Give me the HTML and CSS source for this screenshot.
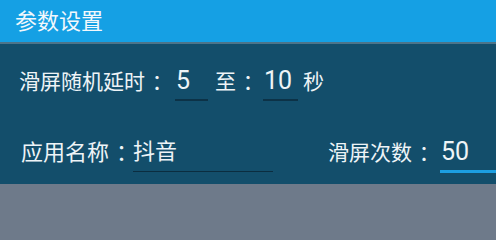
FILE: index.html
```html
<!DOCTYPE html>
<html lang="zh-CN">
<head>
<meta charset="utf-8">
<title>参数设置</title>
<link rel="stylesheet" href="styles.css">
</head>
<body>
<div class="header">参数设置</div>
<div class="sep"></div>
<div class="panel">
  <div class="row row1">
    <span class="label">滑屏随机延时<span class="colon">：</span></span>
    <span class="field f-min">5</span>
    <span class="label to">至<span class="colon">：</span></span>
    <span class="field f-max">10</span>
    <span class="label unit">秒</span>
  </div>
  <div class="row row2">
    <div class="group">
      <span class="label lg">应用名称<span class="colon">：</span></span>
      <span class="field f-app">抖音</span>
    </div>
    <div class="group">
      <span class="label lg2">滑屏次数<span class="colon">：</span></span>
      <span class="field f-count">50</span>
    </div>
  </div>
</div>
</body>
</html>
```
FILE: styles.css
```css
html, body {
  margin: 0;
  padding: 0;
}
body {
  width: 496px;
  height: 225px;
  overflow: hidden;
  background: #6e7a8a;
  font-family: Roboto, "Noto Sans CJK SC", sans-serif;
  color: #eef4f7;
}
.header {
  height: 42px;
  box-sizing: border-box;
  padding: 1px 0 0 15px;
  line-height: 42px;
  font-size: 22px;
  background: #15a0e4;
  color: #f2f8fc;
}
.sep {
  height: 2px;
  background: #4d7489;
}
.panel {
  height: 140px;
  background: #134e6b;
  padding-left: 19px;
  box-sizing: border-box;
  overflow: hidden;
}
.row {
  display: flex;
  align-items: center;
  height: 38px;
}
.row1 {
  margin-top: 19px;
}
.label {
  font-size: 21px;
  line-height: 38px;
  white-space: nowrap;
}
.colon {
  display: inline-block;
  padding-left: 0.32em;
  letter-spacing: -0.32em;
  white-space: nowrap;
}
.field {
  height: 38px;
  box-sizing: border-box;
  font-size: 25px;
  line-height: 35px;
  border-bottom: 2px solid #0c3247;
  padding-left: 1px;
}
.f-min {
  width: 33px;
  margin-left: 9px;
}
.to {
  margin-left: 7px;
}
.f-max {
  width: 35px;
  margin-left: 6px;
}
.unit {
  margin-left: 5px;
}
.row2 {
  margin-top: 33px;
  justify-content: space-between;
  align-items: stretch;
}
.group {
  display: flex;
  align-items: center;
}
.lg {
  font-size: 22px;
  margin-left: 2px;
}
.lg2 {
  margin-right: 7px;
}
.f-app {
  width: 140px;
  margin-left: 2px;
  font-size: 22px;
  line-height: 36px;
  padding-left: 0;
  border-bottom: 1.5px solid #0b2d40;
}
.f-count {
  width: 56px;
  border-bottom: 3px solid #1c9fe2;
  padding-left: 1px;
  height: 39px;
}
```
